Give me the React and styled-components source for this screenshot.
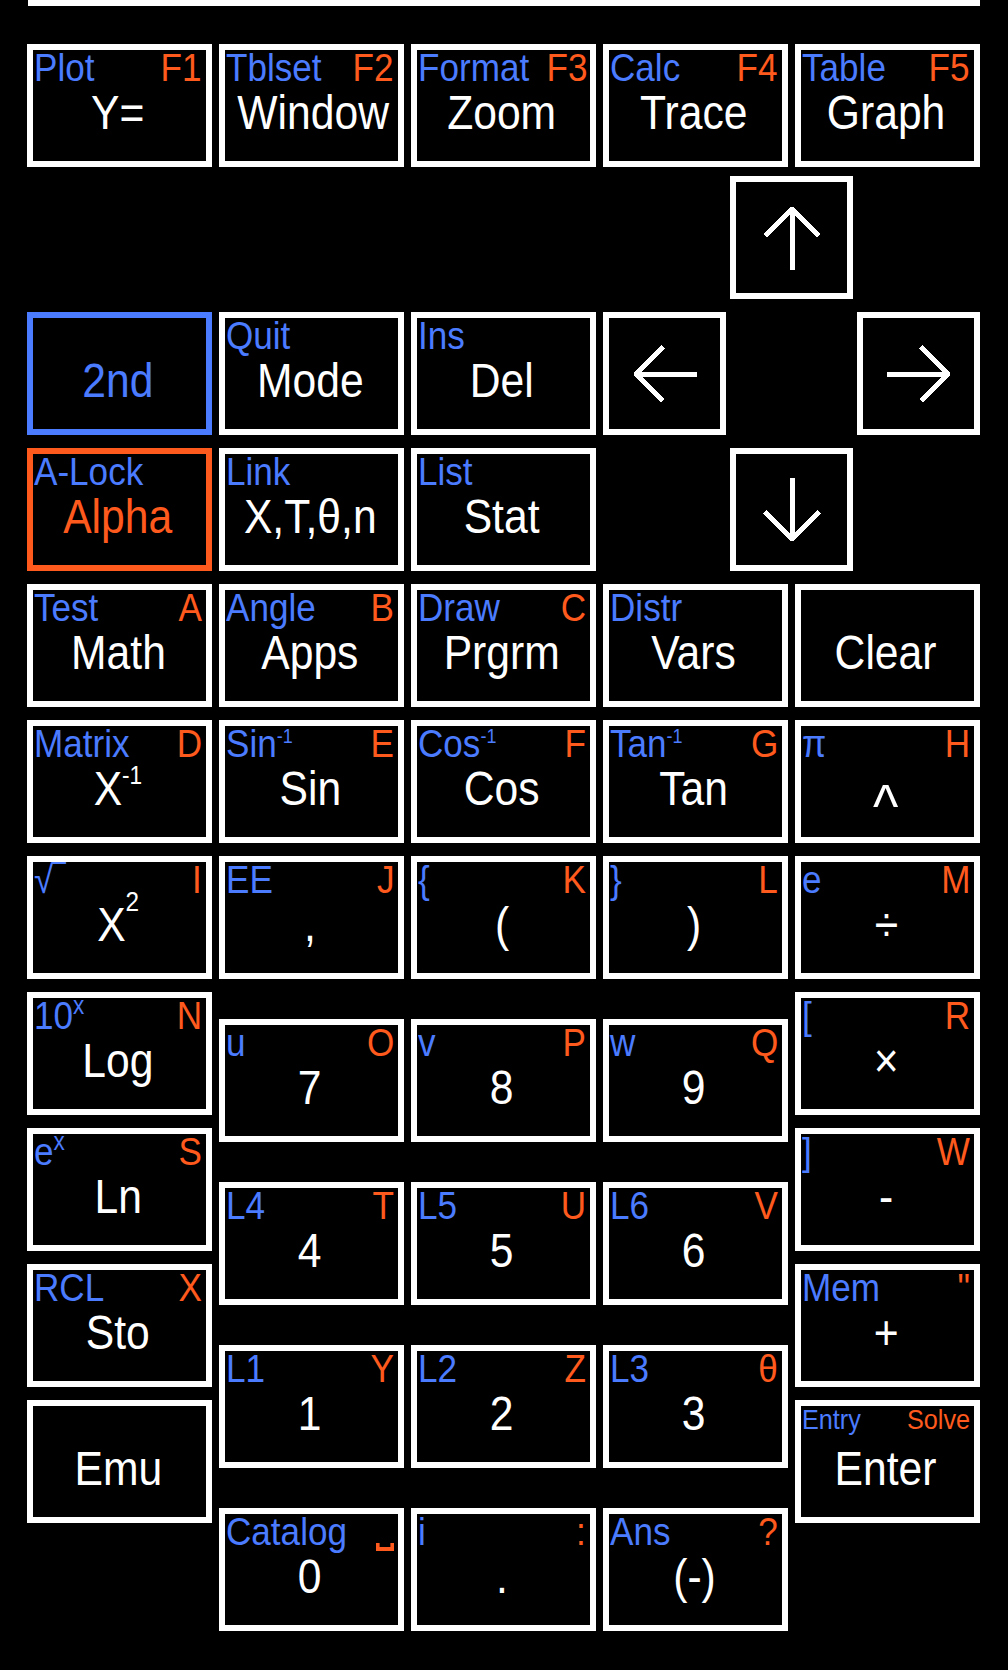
import React from 'react';
import styled, { createGlobalStyle } from 'styled-components';

const BLUE = '#4b7bff';
const ORANGE = '#ff5a1e';

const Global = createGlobalStyle`
  html, body { margin: 0; padding: 0; background: #000; }
  body { font-family: "Liberation Sans", Arial, "DejaVu Sans", sans-serif; }
`;

const Page = styled.div`
  width: 1008px;
  min-height: 1670px;
  box-sizing: border-box;
  padding: 0 28px 0 27px;
  background: #000;
  display: flex;
  flex-direction: column;
`;

const ScreenEdge = styled.div`
  height: 6px;
  margin-left: 1px;
  background: #fff;
`;

const KeyRow = styled.div`
  display: grid;
  grid-template-columns: repeat(5, 185px);
  column-gap: 7px;
  row-gap: 13px;
  margin-top: ${p => p.$top}px;
`;

const NavBlock = styled.div`
  display: grid;
  grid-template-columns: 185px 185px 185px 377px;
  grid-template-rows: repeat(3, 123px);
  column-gap: 7px;
  row-gap: 13px;
  margin-top: 9px;
`;

const NavKeys = styled.div`
  grid-column: 1 / span 3;
  grid-row: 2 / span 2;
  display: grid;
  grid-template-columns: repeat(3, 185px);
  grid-template-rows: repeat(2, 123px);
  column-gap: 7px;
  row-gap: 13px;
`;

const ArrowPad = styled.div`
  grid-column: 4;
  grid-row: 1 / span 3;
  display: grid;
  grid-template-columns: repeat(3, 123px);
  grid-template-rows: repeat(3, 123px);
  column-gap: 4px;
  row-gap: 13px;
`;

const Lower = styled.div`
  display: grid;
  grid-template-columns: 185px 569px 185px;
  column-gap: 7px;
  align-items: start;
  margin-top: 13px;
`;

const SideCol = styled.div`
  display: flex;
  flex-direction: column;
  gap: 13px;
`;

const NumPad = styled.div`
  display: grid;
  grid-template-columns: repeat(3, 185px);
  column-gap: 7px;
  row-gap: 40px;
  padding-top: 27px;
`;

const KeyBox = styled.div`
  box-sizing: border-box;
  height: 123px;
  border: 6px solid ${p => p.$edge || '#fff'};
  background: #000;
  display: flex;
  flex-direction: column;
  padding: 2px 4px 0 1px;
  overflow: hidden;
  grid-column: ${p => p.$col || 'auto'};
  grid-row: ${p => p.$row || 'auto'};
`;

const ArrowBox = styled(KeyBox)`
  align-items: center;
  justify-content: center;
  padding: 0;
`;

const SubRow = styled.div`
  display: flex;
  justify-content: space-between;
  align-items: flex-start;
  height: 32px;
  font-size: ${p => (p.$small ? 28 : 39)}px;
  line-height: ${p => (p.$small ? 24 : 32)}px;
  white-space: nowrap;
`;

const Shift = styled.span`
  display: inline-block;
  color: ${p => p.$color};
  transform: scaleX(0.9);
  transform-origin: ${p => p.$side} center;
`;

const Legend = styled.div`
  margin-top: 4px;
  text-align: center;
  font-size: 49px;
  line-height: 49px;
  color: ${p => p.$color || '#fff'};
  white-space: nowrap;
`;

const LegendText = styled.span`
  display: inline-block;
  transform: scaleX(0.87);
`;

const Sup = styled.span`
  font-size: ${p => p.$size}px;
  line-height: 0;
  vertical-align: ${p => p.$raise}px;
`;

const Caret = styled.span`
  font-size: 62px;
  line-height: 0;
  vertical-align: -22px;
`;

const SpaceMark = styled.span`
  display: inline-block;
  width: 12px;
  height: 4px;
  border: 4px solid ${ORANGE};
  border-top: 0;
  vertical-align: -6px;
`;

const ArrowSvg = styled.svg`
  width: 64px;
  height: 64px;
  transform: rotate(${p => p.$rot}deg);
`;

function Arrow({ rot }) {
  return (
    <ArrowSvg viewBox="0 0 64 64" $rot={rot} shapeRendering="crispEdges">
      <path
        d="M32 3 V64 M5 30 L32 3 L59 30"
        fill="none"
        stroke="#fff"
        strokeWidth="5"
        strokeLinejoin="bevel"
      />
    </ArrowSvg>
  );
}

function Key({ tl, tr, main, edge, mainColor, small, tlColor }) {
  return (
    <KeyBox $edge={edge}>
      <SubRow $small={small}>
        <Shift $color={tlColor || BLUE} $side="left">{tl}</Shift>
        <Shift $color={ORANGE} $side="right">{tr}</Shift>
      </SubRow>
      <Legend $color={mainColor}>
        <LegendText>{main}</LegendText>
      </Legend>
    </KeyBox>
  );
}

function ArrowKey({ rot, col, row }) {
  return (
    <ArrowBox $col={col} $row={row}>
      <Arrow rot={rot} />
    </ArrowBox>
  );
}

const topRow = [
  { tl: 'Plot', tr: 'F1', main: 'Y=' },
  { tl: 'Tblset', tr: 'F2', main: 'Window' },
  { tl: 'Format', tr: 'F3', main: 'Zoom' },
  { tl: 'Calc', tr: 'F4', main: 'Trace' },
  { tl: 'Table', tr: 'F5', main: 'Graph' },
];

const navKeys = [
  { main: '2nd', edge: BLUE, mainColor: BLUE },
  { tl: 'Quit', main: 'Mode' },
  { tl: 'Ins', main: 'Del' },
  { tl: 'A-Lock', main: 'Alpha', edge: ORANGE, mainColor: ORANGE },
  { tl: 'Link', main: 'X,T,θ,n' },
  { tl: 'List', main: 'Stat' },
];

const inv = name => (
  <>
    {name}
    <Sup $size={20} $raise={14}>-1</Sup>
  </>
);

const funcKeys = [
  { tl: 'Test', tr: 'A', main: 'Math' },
  { tl: 'Angle', tr: 'B', main: 'Apps' },
  { tl: 'Draw', tr: 'C', main: 'Prgrm' },
  { tl: 'Distr', main: 'Vars' },
  { main: 'Clear' },
  { tl: 'Matrix', tr: 'D', main: <>X<Sup $size={26} $raise={21}>-1</Sup></> },
  { tl: inv('Sin'), tr: 'E', main: 'Sin' },
  { tl: inv('Cos'), tr: 'F', main: 'Cos' },
  { tl: inv('Tan'), tr: 'G', main: 'Tan' },
  { tl: 'π', tr: 'H', main: <Caret>^</Caret> },
  { tl: '√‾', tr: 'I', main: <>X<Sup $size={28} $raise={30}>2</Sup></> },
  { tl: 'EE', tr: 'J', main: ',' },
  { tl: '{', tr: 'K', main: '(' },
  { tl: '}', tr: 'L', main: ')' },
  { tl: 'e', tr: 'M', main: '÷' },
];

const leftCol = [
  { tl: <>10<Sup $size={25} $raise={15}>x</Sup></>, tr: 'N', main: 'Log' },
  { tl: <>e<Sup $size={25} $raise={15}>x</Sup></>, tr: 'S', main: 'Ln' },
  { tl: 'RCL', tr: 'X', main: 'Sto' },
  { main: 'Emu' },
];

const numKeys = [
  { tl: 'u', tr: 'O', main: '7' },
  { tl: 'v', tr: 'P', main: '8' },
  { tl: 'w', tr: 'Q', main: '9' },
  { tl: 'L4', tr: 'T', main: '4' },
  { tl: 'L5', tr: 'U', main: '5' },
  { tl: 'L6', tr: 'V', main: '6' },
  { tl: 'L1', tr: 'Y', main: '1' },
  { tl: 'L2', tr: 'Z', main: '2' },
  { tl: 'L3', tr: 'θ', main: '3' },
  { tl: 'Catalog', tr: <SpaceMark />, main: '0' },
  { tl: 'i', tr: ':', main: '.' },
  { tl: 'Ans', tr: '?', main: '(-)' },
];

const rightCol = [
  { tl: '[', tr: 'R', main: '×' },
  { tl: ']', tr: 'W', main: '-' },
  { tl: 'Mem', tr: '"', main: '+' },
  { tl: 'Entry', tr: 'Solve', main: 'Enter', small: true },
];

export default function App() {
  return (
    <>
      <Global />
      <Page>
        <ScreenEdge />
        <KeyRow $top={38}>
          {topRow.map((k, i) => <Key key={i} {...k} />)}
        </KeyRow>
        <NavBlock>
          <NavKeys>
            {navKeys.map((k, i) => <Key key={i} {...k} />)}
          </NavKeys>
          <ArrowPad>
            <ArrowKey rot={0} col={2} row={1} />
            <ArrowKey rot={-90} col={1} row={2} />
            <ArrowKey rot={90} col={3} row={2} />
            <ArrowKey rot={180} col={2} row={3} />
          </ArrowPad>
        </NavBlock>
        <KeyRow $top={13}>
          {funcKeys.map((k, i) => <Key key={i} {...k} />)}
        </KeyRow>
        <Lower>
          <SideCol>
            {leftCol.map((k, i) => <Key key={i} {...k} />)}
          </SideCol>
          <NumPad>
            {numKeys.map((k, i) => <Key key={i} {...k} />)}
          </NumPad>
          <SideCol>
            {rightCol.map((k, i) => <Key key={i} {...k} />)}
          </SideCol>
        </Lower>
      </Page>
    </>
  );
}
